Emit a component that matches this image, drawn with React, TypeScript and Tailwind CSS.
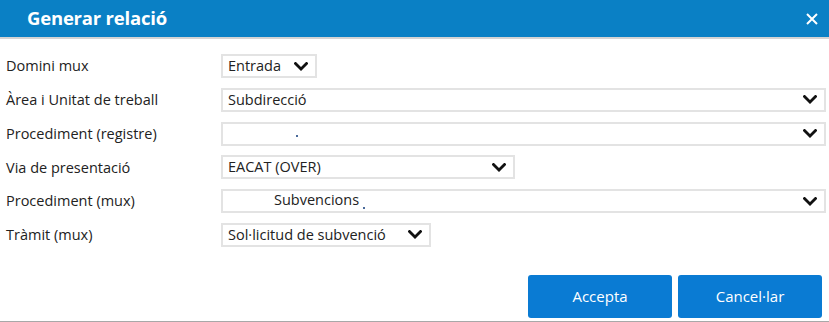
import React from 'react';

const Chevron = () => (
  <svg width="14" height="9" viewBox="0 0 14 9" className="shrink-0">
    <path d="M1.5 1.5 L7 7 L12.5 1.5" fill="none" stroke="#111" strokeWidth="2.8" strokeLinecap="square" />
  </svg>
);

type SelectProps = {
  value?: React.ReactNode;
  className: string;
};

const FakeSelect = ({ value, className }: SelectProps) => (
  <div
    className={`h-[24px] flex items-center justify-between border-2 border-[#e3e3e3] bg-white pl-[5px] pr-[7px] text-[14.5px] text-[#222] ${className}`}
  >
    <span className="whitespace-nowrap leading-none">{value}</span>
    <Chevron />
  </div>
);

const rows: { label: string; select: React.ReactNode }[] = [
  { label: 'Domini mux', select: <FakeSelect value="Entrada" className="w-[96px]" /> },
  { label: 'Àrea i Unitat de treball', select: <FakeSelect value="Subdirecció" className="w-[605px]" /> },
  {
    label: 'Procediment (registre)',
    select: (
      <FakeSelect
        value={<span className="inline-block w-[72px] h-[14px] relative"><span className="absolute left-[68px] top-[10px] w-[2px] h-[2px] bg-[#4a6a9a]" /></span>}
        className="w-[605px]"
      />
    ),
  },
  { label: 'Via de presentació', select: <FakeSelect value="EACAT (OVER)" className="w-[294px]" /> },
  {
    label: 'Procediment (mux)',
    select: (
      <FakeSelect
        value={<span className="pl-[46px]">Subvencions<span className="inline-block w-[2px] h-[2px] bg-[#4a6a9a] ml-[4px] align-[-4px]" /></span>}
        className="w-[605px]"
      />
    ),
  },
  { label: 'Tràmit (mux)', select: <FakeSelect value="Sol·licitud de subvenció" className="w-[210px]" /> },
];

export default function App() {
  return (
    <div className="w-[829px] h-[322px] bg-white flex flex-col font-['Open_Sans',sans-serif] overflow-hidden">
      <div className="h-[37px] bg-[#0a80c5] flex items-center justify-between pl-[27px] pr-[11px] shrink-0">
        <h1 className="text-white text-[18.5px] font-bold tracking-[-0.2px] leading-none">Generar relació</h1>
        <svg width="12" height="12" viewBox="0 0 12 12">
          <path d="M1 1 L11 11 M11 1 L1 11" stroke="#fff" strokeWidth="2" />
        </svg>
      </div>
      <div className="h-[2px] bg-[#d4d4d4] shrink-0" />
      <div className="flex-1 flex flex-col">
        <div className="grid grid-cols-[221px_1fr] gap-y-[9.8px] pt-[15px] pl-0 pr-[4px]">
          {rows.map((r) => (
            <React.Fragment key={r.label}>
              <div className="h-[24px] flex items-center pl-[6px] text-[14.5px] text-[#222]">{r.label}</div>
              <div className="flex">{r.select}</div>
            </React.Fragment>
          ))}
        </div>
        <div className="flex justify-end gap-[6px] pr-[7px] mt-auto mb-[3px]">
          <button className="w-[144px] h-[43px] bg-[#0a7bd3] rounded-[3px] text-white text-[15px]">Accepta</button>
          <button className="w-[144px] h-[43px] bg-[#0a7bd3] rounded-[3px] text-white text-[15px]">Cancel·lar</button>
        </div>
      </div>
      <div className="h-[1px] bg-[#a8a8a8] shrink-0" />
    </div>
  );
}
